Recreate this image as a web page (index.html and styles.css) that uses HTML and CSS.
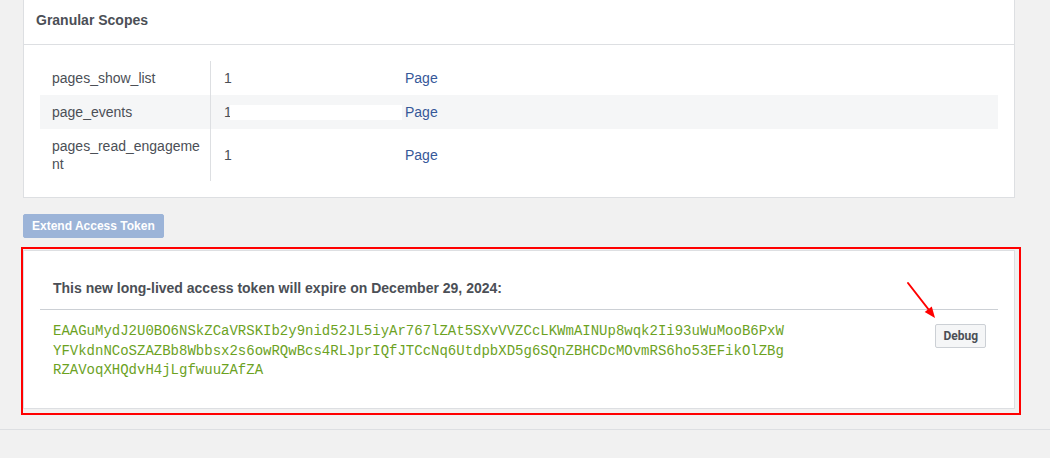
FILE: index.html
```html
<!DOCTYPE html>
<html lang="en">
<head>
<meta charset="utf-8">
<title>Access Token</title>
<link rel="stylesheet" href="styles.css">
</head>
<body>
<div class="page">
  <section class="card scopes">
    <div class="card-header">Granular Scopes</div>
    <div class="card-body">
      <div class="scope-table">
        <div class="row">
          <div class="cell name">pages_show_list</div>
          <div class="cell count">1</div>
          <div class="cell type"><a class="link" href="#">Page</a></div>
        </div>
        <div class="row alt">
          <div class="cell name">page_events</div>
          <div class="cell count">1<span class="redact"></span></div>
          <div class="cell type"><a class="link" href="#">Page</a></div>
        </div>
        <div class="row">
          <div class="cell name">pages_read_engagement</div>
          <div class="cell count">1</div>
          <div class="cell type"><a class="link" href="#">Page</a></div>
        </div>
      </div>
    </div>
  </section>

  <button class="btn-extend" disabled>Extend Access Token</button>

  <section class="card token-card">
    <div class="token-inner">
      <h3 class="token-title">This new long-lived access token will expire on December 29, 2024:</h3>
      <div class="token-row">
        <code class="token">EAAGuMydJ2U0BO6NSkZCaVRSKIb2y9nid52JL5iyAr767lZAt5SXvVVZCcLKWmAINUp8wqk2Ii93uWuMooB6PxWYFVkdnNCoSZAZBb8Wbbsx2s6owRQwBcs4RLJprIQfJTCcNq6UtdpbXD5g6SQnZBHCDcMOvmRS6ho53EFikOlZBgRZAVoqXHQdvH4jLgfwuuZAfZA</code>
        <button class="btn-debug">Debug</button>
      </div>
    </div>
    <svg class="arrow" width="40" height="46" viewBox="0 0 40 46" aria-hidden="true">
      <line x1="6" y1="6" x2="27" y2="33" stroke="#ff0000" stroke-width="2" stroke-linecap="round"/>
      <polygon points="33,41 22.7,35 29.8,29.5" fill="#ff0000"/>
    </svg>
    <div class="highlight-box"></div>
  </section>
</div>
<div class="footer"></div>
</body>
</html>
```

FILE: styles.css
```css
html, body {
  margin: 0;
  padding: 0;
}

body {
  background: #f1f1f1;
  font-family: "Liberation Sans", Arial, sans-serif;
  font-size: 14px;
  color: #4b4f56;
  height: 458px;
  overflow: hidden;
}

.page {
  padding-left: 23px;
}

.card {
  width: 992px;
  box-sizing: border-box;
  background: #fff;
  border: 1px solid #dddfe2;
}

.scopes {
  margin-top: -1px;
}

.card-header {
  padding: 11px 12px 15px;
  line-height: 18px;
  font-weight: bold;
  font-size: 14px;
  color: #4b4f56;
  border-bottom: 1px solid #dddfe2;
}

.card-body {
  padding: 16px;
}

.row {
  display: flex;
  align-items: center;
  line-height: 18px;
}

.row.alt {
  background: #f5f6f7;
}

.cell {
  box-sizing: border-box;
  padding: 8px 12px;
}

.name {
  width: 171px;
  align-self: stretch;
  padding: 8px 6px 8px 12px;
  border-right: 1px solid #dddfe2;
  word-break: break-all;
}

.count {
  width: 182px;
  padding-left: 13px;
  position: relative;
}

.redact {
  position: absolute;
  left: 19px;
  top: 10px;
  width: 172px;
  height: 15px;
  background: #fff;
}

.type {
  flex: 1;
}

.link {
  color: #365899;
  text-decoration: none;
}

.btn-extend {
  display: block;
  margin: 16px 0 0;
  height: 24px;
  padding: 0 8px;
  border: 1px solid #9cb4d8;
  border-radius: 2px;
  background: #9cb4d8;
  color: #fff;
  font-family: "Liberation Sans", Arial, sans-serif;
  font-weight: bold;
  font-size: 12px;
  line-height: 22px;
}

.token-card {
  margin-top: 12px;
  position: relative;
}

.token-inner {
  padding: 0 16px;
}

.token-title {
  margin: 0;
  padding: 28px 13px 12px;
  font-size: 14px;
  line-height: 18px;
  font-weight: bold;
  color: #4b4f56;
  border-bottom: 1px solid #ccd0d5;
}

.token-row {
  display: flex;
  justify-content: space-between;
  align-items: flex-start;
  padding: 12px 12px 27px 13px;
}

.token {
  width: 735px;
  font-family: "Liberation Mono", "Courier New", monospace;
  font-size: 14px;
  line-height: 19.5px;
  color: #6ca21f;
  word-break: break-all;
}

.btn-debug {
  margin-top: 2px;
  height: 24px;
  padding: 0 7px;
  border: 1px solid #ccd0d5;
  border-radius: 2px;
  background: #f5f6f7;
  color: #4b4f56;
  font-family: Roboto, "Liberation Sans", sans-serif;
  font-weight: bold;
  font-size: 12px;
  line-height: 22px;
}

.arrow {
  position: absolute;
  left: 878px;
  top: 26px;
}

.highlight-box {
  position: absolute;
  left: -3px;
  top: -4px;
  width: 1000px;
  height: 168px;
  box-sizing: border-box;
  border: 2px solid #ff0000;
  pointer-events: none;
}

.footer {
  margin-top: 20px;
  border-top: 1px solid #dddfe2;
  height: 40px;
}
```
